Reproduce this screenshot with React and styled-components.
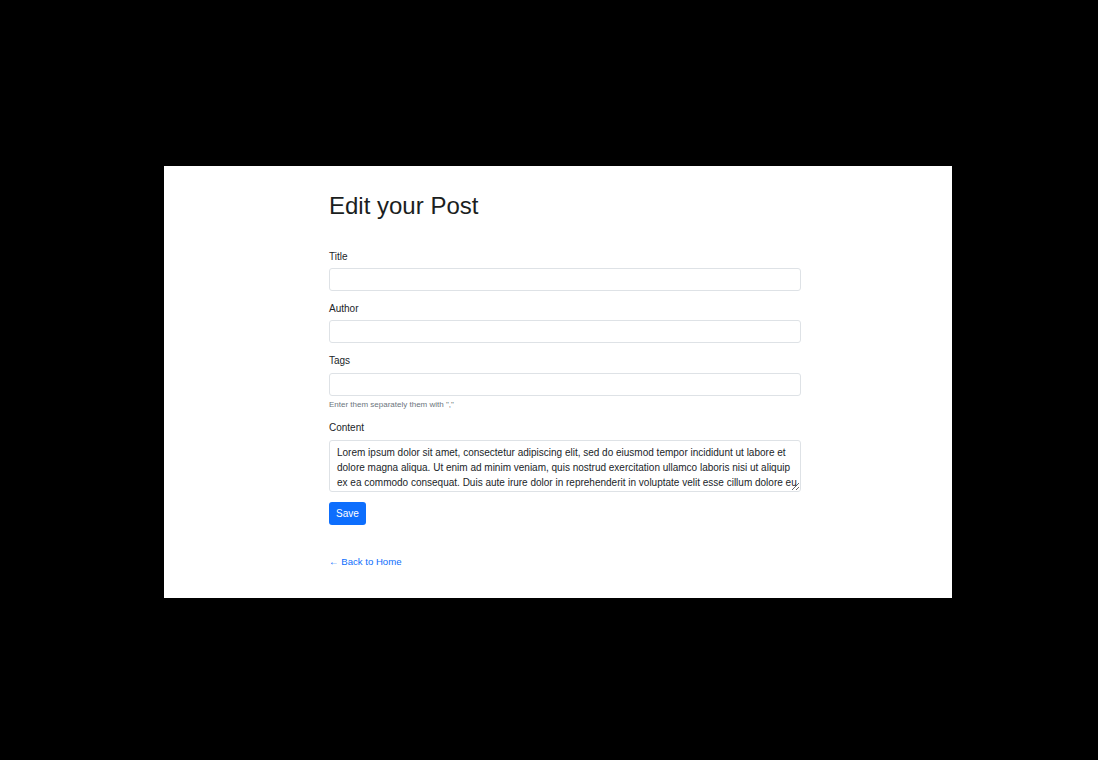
import React from "react"
import styled, { createGlobalStyle } from "styled-components"

const GlobalStyle = createGlobalStyle`
  html, body {
    margin: 0;
    padding: 0;
    background: #000;
  }
  body {
    font-family: "Liberation Sans", Arial, sans-serif;
  }
`

const Screen = styled.div`
  min-height: 760px;
  padding-top: 166px;
  box-sizing: border-box;
`

const Panel = styled.div`
  margin-left: 164px;
  width: 788px;
  height: 432px;
  background: #fff;
  box-sizing: border-box;
  padding: 25px 0 0 165px;
`

const Column = styled.div`
  width: 472px;
`

const Heading = styled.h1`
  margin: 0 0 29px;
  font-size: 24px;
  line-height: 29px;
  font-weight: 400;
  color: #1b1e21;
`

const Group = styled.div`
  margin-bottom: 10px;
`

const Label = styled.label`
  display: block;
  font-size: 10px;
  line-height: 15px;
  color: #212529;
  margin-bottom: ${(p) => p.$gap || 4}px;
`

const Input = styled.input`
  display: block;
  width: 100%;
  height: 23px;
  box-sizing: border-box;
  border: 1px solid #dee2e6;
  border-radius: 3px;
  background: #fff;
  padding: 0 8px;
  font: inherit;
  font-size: 10px;
  outline: none;
`

const Help = styled.div`
  margin-top: 4px;
  font-size: 8px;
  line-height: 10px;
  color: #6c757d;
`

const TextArea = styled.textarea`
  display: block;
  width: 100%;
  height: 52px;
  box-sizing: border-box;
  border: 1px solid #dee2e6;
  border-radius: 3px;
  padding: 4px 3px 4px 7px;
  font-family: "Liberation Sans", Arial, sans-serif;
  font-size: 10px;
  line-height: 15px;
  color: #212529;
  resize: vertical;
  overflow: hidden;
  outline: none;
`

const SaveButton = styled.button`
  display: block;
  height: 23px;
  padding: 0 7px;
  border: none;
  border-radius: 3px;
  background: #0d6efd;
  color: #fff;
  font-family: "Liberation Sans", Arial, sans-serif;
  font-size: 10px;
  cursor: pointer;
`

const BackLink = styled.a`
  display: inline-block;
  margin-top: 31px;
  font-size: 9.6px;
  line-height: 12px;
  color: #0d6efd;
  text-decoration: none;
`

const lorem =
  "Lorem ipsum dolor sit amet, consectetur adipiscing elit, sed do eiusmod tempor incididunt ut labore et dolore magna aliqua. Ut enim ad minim veniam, quis nostrud exercitation ullamco laboris nisi ut aliquip ex ea commodo consequat. Duis aute irure dolor in reprehenderit in voluptate velit esse cillum dolore eu fugiat nulla pariatur. Excepteur sint occaecat cupidatat non proident, sunt in culpa qui officia deserunt mollit anim id est laborum."

export default function App() {
  return (
    <>
      <GlobalStyle />
      <Screen>
        <Panel>
          <Column>
            <Heading>Edit your Post</Heading>
            <Group>
              <Label>Title</Label>
              <Input type="text" />
            </Group>
            <Group>
              <Label>Author</Label>
              <Input type="text" />
            </Group>
            <Group>
              <Label $gap={5}>Tags</Label>
              <Input type="text" />
              <Help>Enter them separately them with ","</Help>
            </Group>
            <Group>
              <Label $gap={5}>Content</Label>
              <TextArea defaultValue={lorem} />
            </Group>
            <SaveButton>Save</SaveButton>
            <BackLink href="#">← Back to Home</BackLink>
          </Column>
        </Panel>
      </Screen>
    </>
  )
}
